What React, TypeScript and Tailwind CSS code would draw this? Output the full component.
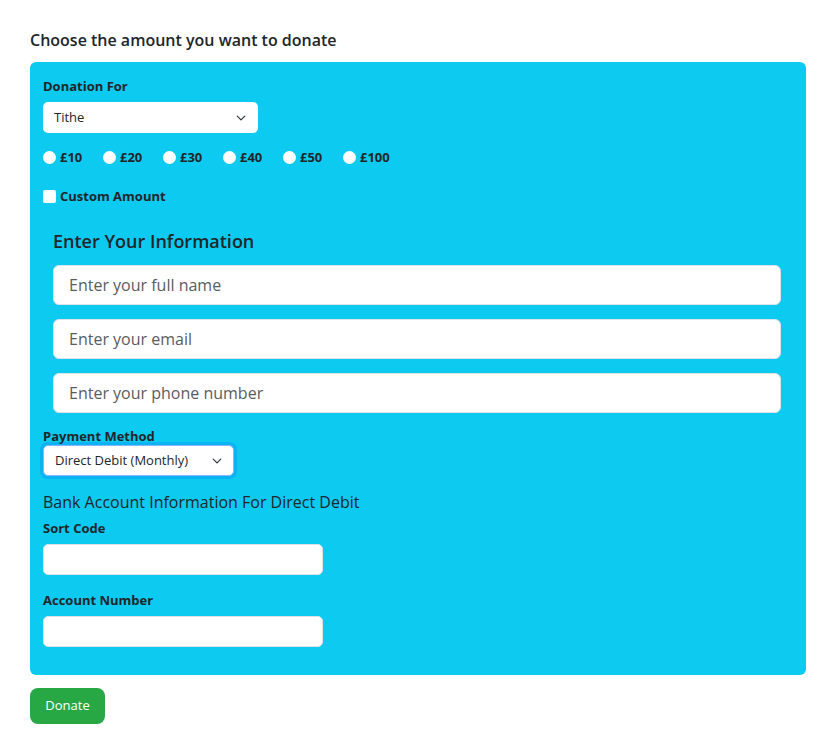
import React, { useState } from 'react'

const amounts = ['£10', '£20', '£30', '£40', '£50', '£100']

const Chevron = () => (
  <svg
    className="pointer-events-none absolute right-[12px] top-1/2 -translate-y-1/2"
    width="10"
    height="10"
    viewBox="0 0 16 16"
    fill="none"
    stroke="#343a40"
    strokeWidth="2"
    strokeLinecap="round"
    strokeLinejoin="round"
  >
    <path d="m2 5 6 6 6-6" />
  </svg>
)

const App = () => {
  const [amount, setAmount] = useState('')
  const [custom, setCustom] = useState(false)

  return (
    <div className="min-h-screen bg-white pl-[30px] pr-[24px] pt-[29px] font-['Open_Sans',sans-serif] text-[#212529]">
      <h2 className="mb-[11px] text-[16px] font-semibold leading-[22px]">
        Choose the amount you want to donate
      </h2>

      <form className="rounded-[6px] bg-[#0dcaf0] px-[13px] pt-[15px] pb-[28px]">
        <label className="block text-[13px] font-bold leading-[18px]">Donation For</label>
        <div className="relative mt-[7px] w-[215px]">
          <select className="h-[31px] w-full appearance-none rounded-[5px] bg-white pl-[11px] text-[13px] outline-none">
            <option>Tithe</option>
            <option>Offering</option>
          </select>
          <Chevron />
        </div>

        <div className="mt-[13px] flex gap-x-[12px]">
          {amounts.map((a) => (
            <label key={a} className="flex w-[48px] items-center gap-x-[4px] text-[13px] font-bold leading-[22px]">
              <input
                type="radio"
                name="amount"
                checked={amount === a}
                onChange={() => setAmount(a)}
                className="h-[13px] w-[13px] appearance-none rounded-full bg-white checked:border-[4px] checked:border-[#0d6efd]"
              />
              {a}
            </label>
          ))}
        </div>

        <label className="mt-[17px] flex items-center gap-x-[4px] text-[13px] font-bold leading-[22px]">
          <input
            type="checkbox"
            checked={custom}
            onChange={() => setCustom(!custom)}
            className="h-[13px] w-[13px] appearance-none rounded-[2px] bg-white checked:bg-[#0d6efd]"
          />
          Custom Amount
        </label>

        <section className="ml-[10px] mr-[12px] mt-[21px]">
          <h3 className="text-[18px] font-semibold leading-[26px]">Enter Your Information</h3>
          <div className="mt-[11px] flex flex-col gap-y-[14px]">
            <input
              placeholder="Enter your full name"
              className="h-[40px] rounded-[6px] border border-[#dee2e6] bg-white px-[15px] text-[16px] outline-none placeholder:text-[#595c5f]"
            />
            <input
              placeholder="Enter your email"
              className="h-[40px] rounded-[6px] border border-[#dee2e6] bg-white px-[15px] text-[16px] outline-none placeholder:text-[#595c5f]"
            />
            <input
              placeholder="Enter your phone number"
              className="h-[40px] rounded-[6px] border border-[#dee2e6] bg-white px-[15px] text-[16px] outline-none placeholder:text-[#595c5f]"
            />
          </div>
        </section>

        <label className="mt-[14px] block text-[13px] font-bold leading-[18px]">Payment Method</label>
        <div className="relative mt-0 w-[191px]">
          <select className="h-[31px] w-full appearance-none rounded-[5px] border border-[#86b7fe] bg-white pl-[11px] text-[13px] shadow-[0_0_0_3px_rgba(13,110,253,0.25)] outline-none">
            <option>Direct Debit (Monthly)</option>
            <option>Card</option>
          </select>
          <Chevron />
        </div>

        <h4 className="mt-[14px] text-[16px] leading-[24px]">Bank Account Information For Direct Debit</h4>

        <label className="mt-[5px] block text-[13px] font-bold leading-[18px]">Sort Code</label>
        <input className="mt-[7px] block h-[31px] w-[280px] rounded-[5px] border border-[#dee2e6] bg-white outline-none" />

        <label className="mt-[16px] block text-[13px] font-bold leading-[18px]">Account Number</label>
        <input className="mt-[7px] block h-[31px] w-[280px] rounded-[5px] border border-[#dee2e6] bg-white outline-none" />
      </form>

      <button className="mt-[13px] h-[36px] w-[75px] rounded-[8px] bg-[#28a745] text-[13px] text-white">
        Donate
      </button>
    </div>
  )
}

export default App
